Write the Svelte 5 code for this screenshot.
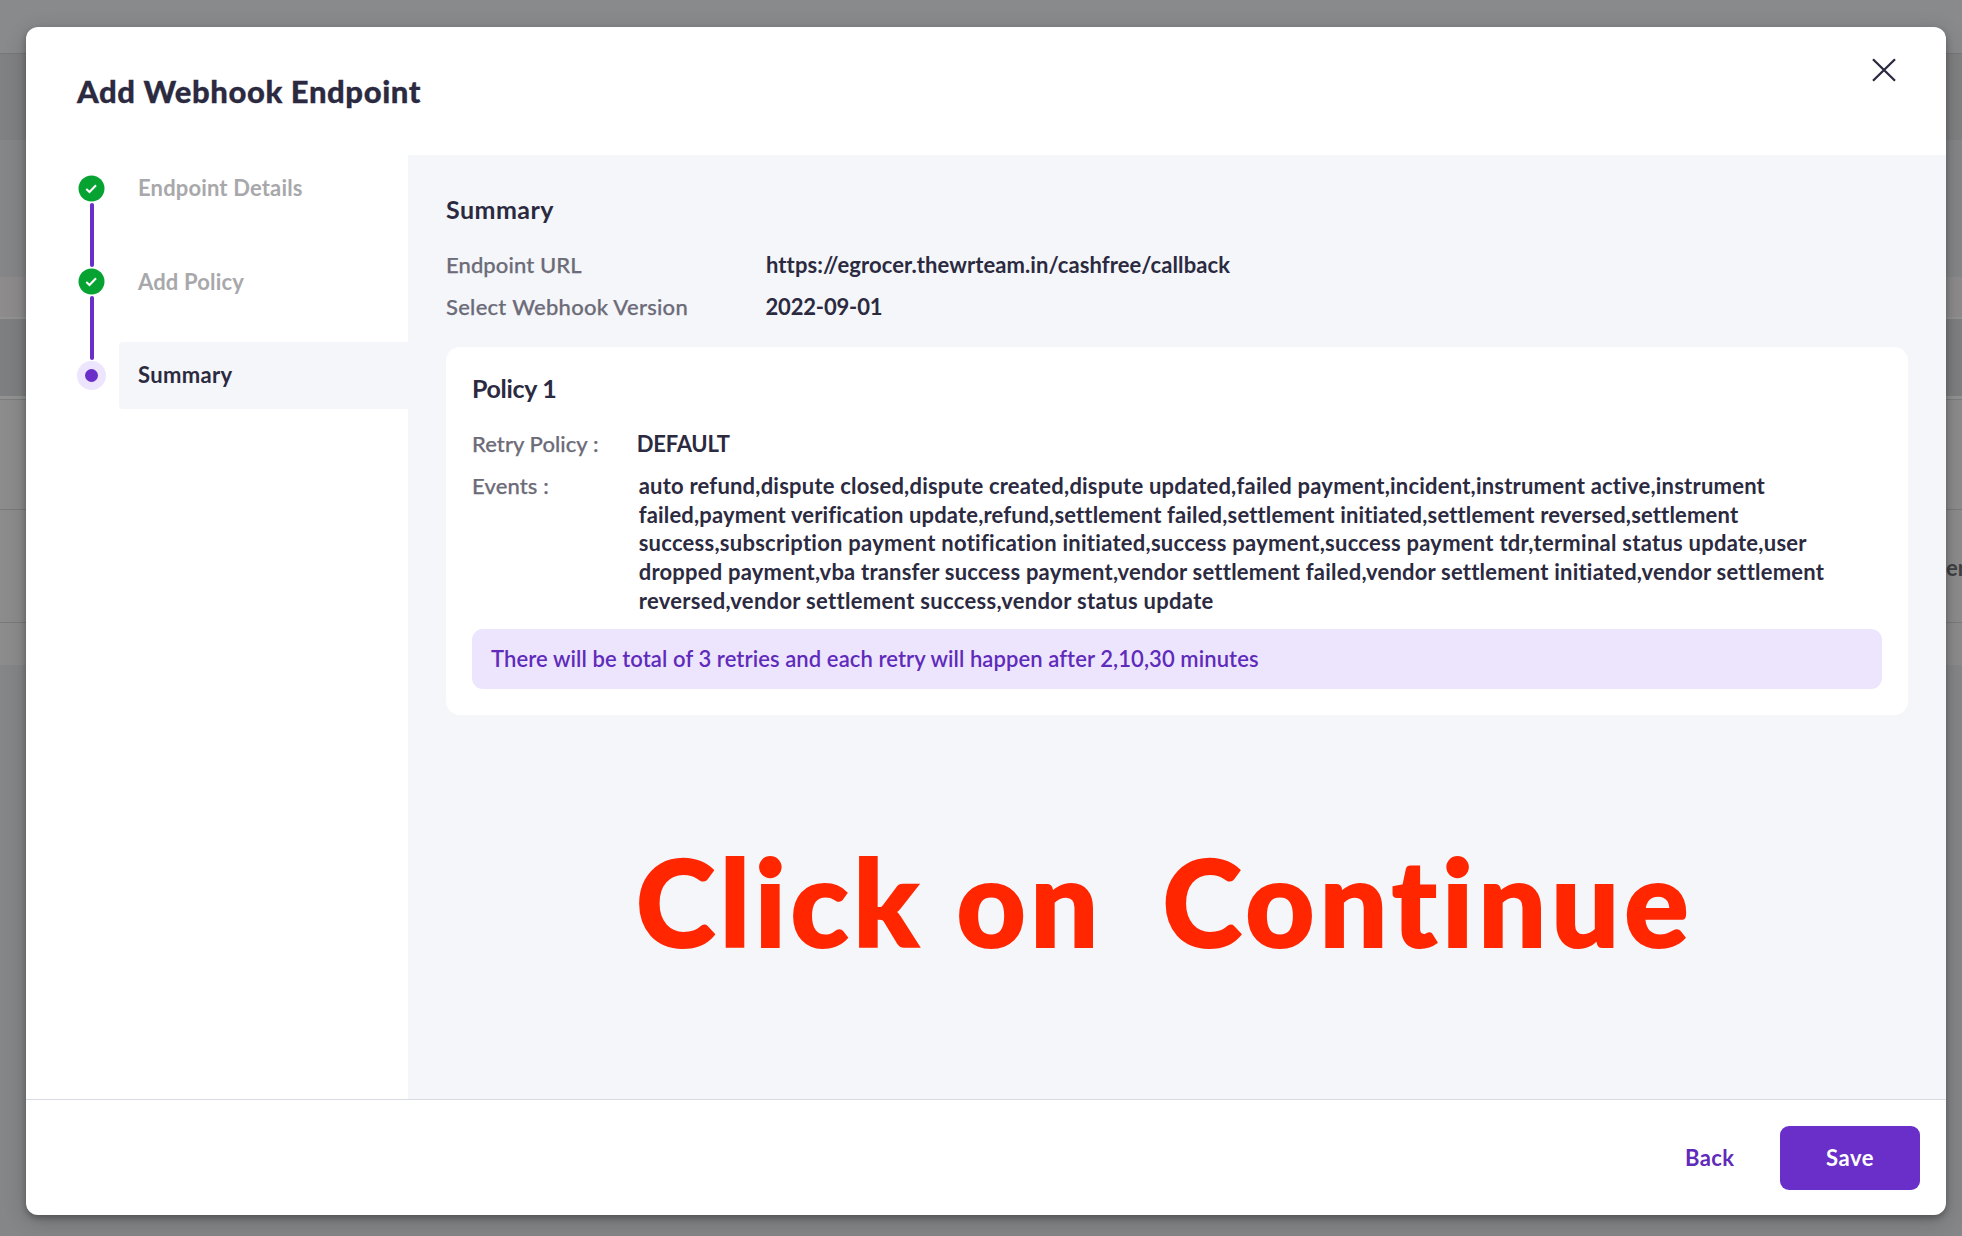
<script>
  const steps = [
    { label: 'Endpoint Details', done: true },
    { label: 'Add Policy', done: true },
    { label: 'Summary', done: false }
  ];
  const eventLines = [
    'auto refund,dispute closed,dispute created,dispute updated,failed payment,incident,instrument active,instrument',
    'failed,payment verification update,refund,settlement failed,settlement initiated,settlement reversed,settlement',
    'success,subscription payment notification initiated,success payment,success payment tdr,terminal status update,user',
    'dropped payment,vba transfer success payment,vendor settlement failed,vendor settlement initiated,vendor settlement',
    'reversed,vendor settlement success,vendor status update'
  ];
</script>

<div class="screen">
  <div class="page" aria-hidden="true">
    <div class="strip top"></div>
    <div class="strip bar"></div>
    <div class="strip intro"></div>
    <div class="strip tools"></div>
    <div class="strip head"></div>
    <div class="strip gap"></div>
    <div class="strip row"></div>
    <div class="strip row second"><span>er</span></div>
    <div class="strip row last"></div>
  </div>

  <div class="modal" role="dialog" aria-label="Add Webhook Endpoint">
    <header>
      <h1>Add Webhook Endpoint</h1>
      <button class="close" aria-label="Close">
        <svg viewBox="0 0 24 24" width="24" height="24"><path d="M1 1.2 L23 22.8 M23 1.2 L1 22.8" /></svg>
      </button>
    </header>

    <div class="body">
      <nav>
        {#each steps as step, i}
          <div class="step" class:current={!step.done}>
            <div class="rail">
              {#if step.done}
                <svg class="dot" viewBox="0 0 29 29" width="29" height="29">
                  <circle cx="14.5" cy="14.5" r="13" fill="#06a332" />
                  <path d="M9.3 15 L12.5 18 L19 11.2" fill="none" stroke="#fff" stroke-width="2.1" />
                </svg>
                <i></i>
              {:else}
                <svg class="dot" viewBox="0 0 29 29" width="29" height="29">
                  <circle cx="14.5" cy="14.5" r="14.5" fill="#ede5fd" />
                  <circle cx="14.5" cy="14.5" r="6.5" fill="#692fc8" />
                </svg>
              {/if}
            </div>
            <div class="tab"><span class="label l{i}">{step.label}</span></div>
          </div>
        {/each}
      </nav>

      <main>
        <h2>Summary</h2>
        <dl>
          <div><dt class="key k1">Endpoint URL</dt><dd class="val v1">https://egrocer.thewrteam.in/cashfree/callback</dd></div>
          <div><dt class="key k2">Select Webhook Version</dt><dd class="val v2">2022-09-01</dd></div>
        </dl>
        <section class="card">
          <h3>Policy 1</h3>
          <dl>
            <div><dt class="key k3">Retry Policy :</dt><dd class="val v3">DEFAULT</dd></div>
            <div>
              <dt class="key k4">Events :</dt>
              <dd class="events">{#each eventLines as line, i}<span class="line e{i}">{line}</span>{/each}</dd>
            </div>
          </dl>
          <p class="note"><span>There will be total of 3 retries and each retry will happen after 2,10,30 minutes</span></p>
        </section>
        <p class="hint"><span class="w1">Click on</span><span class="w2">Continue</span></p>
      </main>
    </div>

    <footer>
      <button class="back">Back</button>
      <button class="save">Save</button>
    </footer>
  </div>
</div>

<style>
  :global(body) { margin: 0; background: #858688; }
  * { box-sizing: border-box; }
  .screen { position: relative; width: 1962px; height: 1236px; overflow: hidden; font-family: Lato, 'Open Sans', sans-serif; font-variant-ligatures: none; color: #2b2a40; background: #858688; }

  /* Dimmed page behind the dialog */
  .page { display: flex; flex-direction: column; height: 100%; }
  .strip { flex: none; }
  .top { height: 54px; background: #898a8c; border-bottom: 1px solid #77787a; }
  .bar { height: 86px; background: #808182; }
  .intro { height: 137px; background: #858688; }
  .tools { height: 42px; background: #8d8b8b; border-bottom: 2px solid #929292; }
  .head { height: 77px; background: #7d7f80; }
  .gap { height: 4px; background: #929292; border-bottom: 1px solid #7d7d7d; }
  .row { height: 110px; background: #8c8c8c; border-bottom: 1px solid #7a7a7a; }
  .second { height: 113px; display: flex; justify-content: flex-end; align-items: center; padding-top: 2px; overflow: hidden; font-size: 22px; font-weight: 700; color: #3f4042; }
  .second span { width: 16px; }
  .row.last { height: 42px; border: 0; }

  .modal { position: absolute; left: 26px; top: 27px; width: 1920px; height: 1188px; display: flex; flex-direction: column; background: #fff; border-radius: 12px; overflow: hidden; box-shadow: 0 3px 6px rgba(0, 0, 0, 0.28), 0 6px 22px rgba(0, 0, 0, 0.2); }
  header { flex: none; height: 128px; display: flex; justify-content: space-between; padding: 46px 50px 0 51px; }
  h1, h2, h3, p, dl, dd { margin: 0; white-space: nowrap; }
  h1 { font-size: 31px; line-height: 36px; font-weight: 900; letter-spacing: 0.58px; -webkit-text-stroke: 0.3px currentColor; }
  button { border: 0; padding: 0; background: none; font: inherit; color: inherit; }
  .close { align-self: flex-start; height: 24px; margin: -15px 0.5px 0 0; }
  .close svg { display: block; fill: none; stroke: #2b2a40; stroke-width: 2.3; }

  .body { flex: 1; display: flex; min-height: 0; }
  nav { width: 382px; padding-left: 51px; }
  .step { display: flex; height: 93.6px; }
  .rail { width: 42px; padding-top: 18.8px; }
  .dot { display: block; }
  .rail i { display: block; width: 4px; height: 64px; margin: 0 0 0 13.3px; border-radius: 2px; background: #692fc8; }
  .tab { flex: 1; height: 67px; display: flex; align-items: center; padding: 0 0 1px 19px; }
  .label { font-size: 22px; line-height: 28px; font-weight: 700; color: #a8a8ab; }
  .l0 { letter-spacing: 0.156px; }
  .l1 { letter-spacing: 0.163px; }
  .l2 { letter-spacing: 0.342px; }
  .current .tab { background: #f4f6fa; border-radius: 4px 0 0 4px; }
  .current .label { color: #2b2a40; }

  main { flex: 1; background: #f4f6fa; padding: 38.5px 38px 0 38px; }
  h2, h3 { font-size: 25px; line-height: 30px; font-weight: 700; }
  h2 { letter-spacing: 0.475px; }
  h3 { letter-spacing: -0.314px; }
  dl { display: flex; flex-direction: column; gap: 14px; margin-top: 27px; font-size: 22px; line-height: 28px; }
  dl > div { display: flex; }
  .key { width: 320px; color: #6c6b78; font-weight: 500; -webkit-text-stroke: 0.25px currentColor; }
  .val, .events { font-weight: 700; }
  .k1 { letter-spacing: 0.097px; }
  .k2 { letter-spacing: 0.272px; }
  .k3 { letter-spacing: 0.069px; }
  .k4 { letter-spacing: 0.156px; }
  .v1 { letter-spacing: 0.085px; }
  .v2 { letter-spacing: -0.15px; margin-left: -0.6px; }
  .v3 { letter-spacing: -0.229px; margin-left: -1.2px; }

  .card { height: 368px; margin-top: 26.5px; padding: 26px 26px 0 26px; background: #fff; border-radius: 14px; }
  .card dl { margin-top: 27px; gap: 14px; }
  .card .key { width: 166px; }
  .events { padding-left: 0.7px; }
  .line { display: block; line-height: 28.7px; }
  .e0 { letter-spacing: 0.211px; }
  .e1 { letter-spacing: 0.158px; }
  .e2 { letter-spacing: 0.257px; }
  .e3 { letter-spacing: 0.212px; }
  .e4 { letter-spacing: 0.309px; }
  .note { display: flex; align-items: center; height: 60px; margin-top: 13px; padding-left: 19px; background: #ede5fd; border-radius: 11px; color: #5f2bbb; font-size: 22px; font-weight: 600; letter-spacing: 0.088px; }

  .hint { display: flex; margin: 114px 0 0 190px; font-size: 120px; line-height: 144px; font-weight: 900; color: #ff2600; -webkit-text-stroke: 2px #ff2600; }
  .w1 { letter-spacing: 4.6px; }
  .w2 { margin-left: 59.5px; letter-spacing: 5px; }

  footer { flex: none; height: 116px; display: flex; align-items: center; justify-content: flex-end; gap: 45.5px; padding: 0 26px; border-top: 1px solid #d9dbe2; font-size: 22px; font-weight: 700; }
  .back { color: #5f2bbb; letter-spacing: 0.439px; }
  .save { width: 140px; height: 64px; border-radius: 9px; background: #692fc8; color: #fff; letter-spacing: 0.539px; }
</style>
